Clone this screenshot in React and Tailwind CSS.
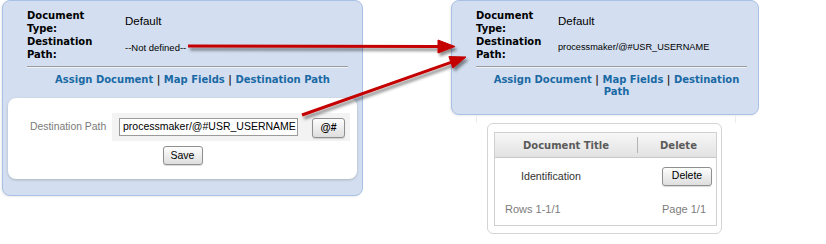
import React from 'react';

const labelFont = { fontFamily: '"DejaVu Sans", Verdana, sans-serif' };

const InfoRows = ({ labelCol, path, pathClass }) => (
  <div className={`grid ${labelCol} items-center`}>
    <div className="max-w-[72px] text-[10px] font-bold leading-[13px] text-black" style={labelFont}>
      Document Type:
    </div>
    <div className="text-[11.5px] text-black font-['Liberation_Sans',Arial,sans-serif]">Default</div>
    <div className="max-w-[72px] text-[10px] font-bold leading-[13px] text-black" style={labelFont}>
      Destination Path:
    </div>
    <div className={`${pathClass} text-black font-['Liberation_Sans',Arial,sans-serif]`}>{path}</div>
  </div>
);

const Links = () => (
  <div
    className="mt-[6px] pl-[10px] text-center text-[10px] font-bold leading-[12px] text-[#1a69a4]"
    style={labelFont}
  >
    <span>Assign Document</span> <span className="text-[#2a2018]">|</span> <span>Map Fields</span>{' '}
    <span className="text-[#2a2018]">|</span> <span>Destination</span> <span>Path</span>
  </div>
);

const GrayButton = ({ children, className }) => (
  <button
    className={`flex items-center justify-center rounded-[3px] border border-[#8f8f8f] bg-gradient-to-b from-[#fdfdfd] to-[#dedede] text-[10.5px] text-black shadow-[0_1px_1px_rgba(0,0,0,0.15)] font-['Liberation_Sans',Arial,sans-serif] ${className}`}
  >
    {children}
  </button>
);

export default function App() {
  return (
    <div className="relative w-[826px] h-[244px] overflow-hidden bg-white">
      <div className="flex items-start">
        {/* left panel */}
        <div className="ml-[2px] flex h-[196px] w-[361px] flex-col rounded-[8px] border border-[#a9c1e6] bg-[#d3dff0] shadow-[-1px_1px_2px_rgba(0,0,0,0.08)]">
          <div className="pl-[24px] pr-[14px] pt-[8px]">
            <InfoRows labelCol="grid-cols-[98px_1fr]" path="--Not defined--" pathClass="text-[9.5px]" />
            <div className="mt-[5px] h-[2px] border-t border-[#9c9c9c] bg-[#eef2f8]" />
            <Links />
          </div>
          <div className="mx-[5px] mt-[12px] flex h-[81px] flex-col items-center rounded-[8px] bg-white shadow-[0_1px_3px_rgba(0,0,0,0.2)]">
            <div className="flex w-full items-center pt-[15px]">
              <div className="w-[104px] pl-[22px] text-[10.4px] text-[#7a7a7a] font-['Liberation_Sans',Arial,sans-serif]">
                Destination Path
              </div>
              <div className="flex h-[28px] w-[238px] items-start bg-[#f3f3f3] pl-[7px] pt-[5px]">
                <div className="flex h-[18px] w-[179px] items-center border border-[#9a9a9a] bg-white pl-[3px] text-[10.5px] text-black font-['Liberation_Sans',Arial,sans-serif]">
                  processmaker/@#USR_USERNAME
                </div>
                <GrayButton className="ml-[14px] h-[20px] w-[33px] font-bold">@#</GrayButton>
              </div>
            </div>
            <GrayButton className="mt-[5px] h-[19px] w-[40px]">Save</GrayButton>
          </div>
        </div>

        {/* right column */}
        <div className="ml-[88px] flex flex-col">
          <div className="h-[115px] w-[308px] rounded-[8px] border border-[#a9c1e6] bg-[#d3dff0] shadow-[-1px_1px_2px_rgba(0,0,0,0.08)]">
            <div className="pl-[24px] pr-[11px] pt-[8px]">
              <InfoRows
                labelCol="grid-cols-[82px_1fr]"
                path="processmaker/@#USR_USERNAME"
                pathClass="text-[9.2px]"
              />
              <div className="mt-[5px] h-[2px] border-t border-[#9c9c9c] bg-[#eef2f8]" />
              <Links />
            </div>
          </div>
          <div className="ml-[25px] h-[8px] w-[260px] border-x border-[#ececec]" />
          <div className="ml-[36px] h-[111px] w-[235px] rounded-[6px] border border-[#d4d4d4] bg-white pl-[6px] pr-[4px] pt-[8px]">
            <div className="flex h-[94px] w-[223px] flex-col border border-[#d0d0d0]">
              <div
                className="flex h-[25px] items-center border-b border-[#c8c8c8] bg-gradient-to-b from-[#f7f7f7] to-[#e2e2e2] text-[10px] font-bold text-[#5a5a5a]"
                style={labelFont}
              >
                <div className="w-[142px] text-center">Document Title</div>
                <div className="h-[16px] w-px bg-[#b4b4b4]" />
                <div className="flex-1 pl-[3px] text-center">Delete</div>
              </div>
              <div className="flex h-[36px] items-center font-['Liberation_Sans',Arial,sans-serif]">
                <div className="w-[143px] pl-[26px] text-[10.7px] text-[#333]">Identification</div>
                <GrayButton className="ml-[24px] h-[19px] w-[50px] text-[#333]">Delete</GrayButton>
              </div>
              <div className="flex h-[30px] items-center text-[11px] text-[#7c7c7c] font-['Liberation_Sans',Arial,sans-serif]">
                <div className="w-[167px] pl-[10px]">Rows 1-1/1</div>
                <div>Page 1/1</div>
              </div>
            </div>
          </div>
        </div>
      </div>

      {/* red arrows */}
      <svg className="pointer-events-none absolute left-0 top-0" width="826" height="244">
        <defs>
          <filter id="sh" x="-10%" y="-50%" width="120%" height="200%">
            <feDropShadow dx="2" dy="3" stdDeviation="1.5" floodColor="#000" floodOpacity="0.45" />
          </filter>
        </defs>
        <g filter="url(#sh)" fill="#c40000" stroke="#c40000">
          <line x1="188" y1="46" x2="440" y2="46.5" strokeWidth="3" />
          <polygon points="455,46.5 438,40 438,53" strokeWidth="1" />
          <line x1="302" y1="115" x2="451" y2="62.3" strokeWidth="3" />
          <polygon points="466,57 448.9,56.6 452.9,68" strokeWidth="1" />
        </g>
      </svg>
    </div>
  );
}
